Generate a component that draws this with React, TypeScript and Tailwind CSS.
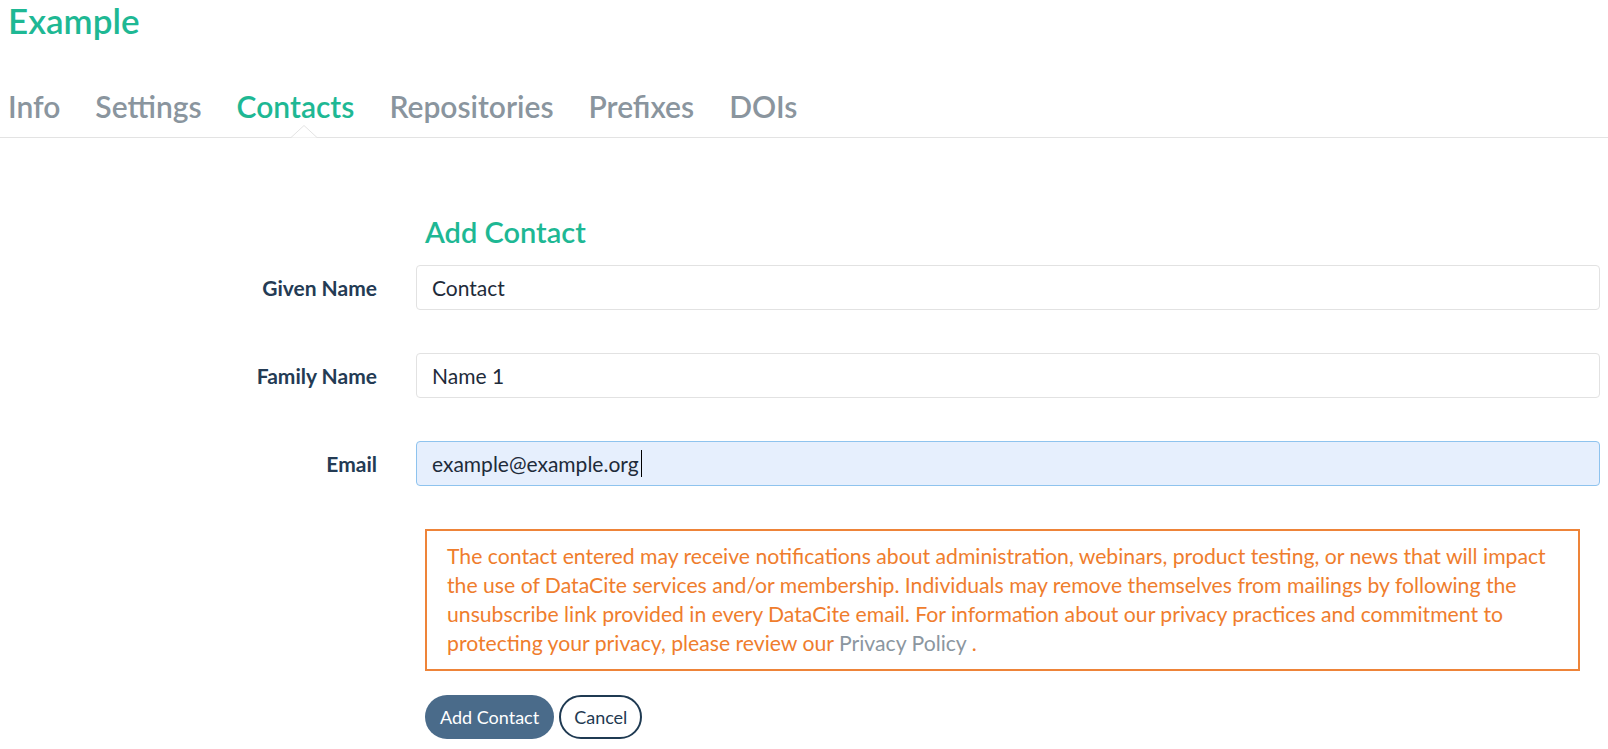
export default function App() {
    const tabs = ["Info", "Settings", "Contacts", "Repositories", "Prefixes", "DOIs"];

    const fields = [
        { label: "Given Name", value: "Contact", focused: false },
        { label: "Family Name", value: "Name 1", focused: false },
        { label: "Email", value: "example@example.org", focused: true },
    ];

    return (
        <div className="min-h-screen bg-white font-['Lato',sans-serif]">

            {/* Title */}
            <h1 className="px-2 text-[35px] leading-[40px] font-semibold text-[#1eb894]">
                Example
            </h1>

            {/* Tabs */}
            <ul className="mt-[49px] flex gap-[35px] px-2 border-b border-[#e3e3e3] h-[49px]">
                {tabs.map((tab) => (
                    <li
                        key={tab}
                        className={
                            tab === "Contacts"
                                ? "relative text-[30px] leading-[34px] font-semibold text-[#1eb894]"
                                : "text-[30px] leading-[34px] font-semibold text-[#8a959e]"
                        }
                    >
                        {tab}
                        {tab === "Contacts" && (
                            <svg
                                className="absolute left-[54px] top-[36px]"
                                width="26"
                                height="13"
                                viewBox="0 0 26 13"
                            >
                                <polyline
                                    points="0,12.5 13,0.5 26,12.5"
                                    fill="#fff"
                                    stroke="#e3e3e3"
                                    strokeWidth="1"
                                />
                            </svg>
                        )}
                    </li>
                ))}
            </ul>

            {/* Form */}
            <div className="px-2 pt-[76px]">

                <h2 className="ml-[417px] text-[29px] leading-[36px] font-semibold text-[#1eb894]">
                    Add Contact
                </h2>

                <div className="mt-[15px] flex flex-col gap-[43px]">
                    {fields.map((field) => (
                        <div key={field.label} className="flex items-center gap-[39px]">
                            <label className="w-[369px] text-right text-[21px] font-bold text-[#243b54]">
                                {field.label}
                            </label>
                            <div
                                className={
                                    field.focused
                                        ? "flex-1 h-[45px] flex items-center px-[15px] rounded-[4px] border border-[#8ec3ee] bg-[#e6effd] text-[21px] text-[#1e2b3a]"
                                        : "flex-1 h-[45px] flex items-center px-[15px] rounded-[4px] border border-[#e2e2e2] bg-white text-[21px] text-[#1e2b3a]"
                                }
                            >
                                {field.value}
                                {field.focused && (
                                    <span className="inline-block w-px h-[27px] bg-black ml-[2px]" />
                                )}
                            </div>
                        </div>
                    ))}
                </div>

                {/* Notice */}
                <div className="mt-[43px] ml-[417px] mr-[20px] border-2 border-[#ee8439] px-[20px] py-[11px] text-[21.2px] leading-[29px] text-[#ef7d2d]">
                    The contact entered may receive notifications about administration, webinars, product testing, or news that will impact
                    <br />
                    the use of DataCite services and/or membership. Individuals may remove themselves from mailings by following the
                    <br />
                    unsubscribe link provided in every DataCite email. For information about our privacy practices and commitment to
                    <br />
                    protecting your privacy, please review our{" "}
                    <a href="#" className="text-[#8b96a0]">Privacy Policy</a> .
                </div>

                {/* Actions */}
                <div className="mt-[24px] ml-[417px] flex gap-[5px]">
                    <button className="h-[44px] px-[15px] rounded-full bg-[#4a6b8a] text-white text-[18px]">
                        Add Contact
                    </button>
                    <button className="h-[44px] px-[13px] rounded-full bg-white border-2 border-[#1f3a52] text-[#1f3a52] text-[18px]">
                        Cancel
                    </button>
                </div>

            </div>
        </div>
    );
}
